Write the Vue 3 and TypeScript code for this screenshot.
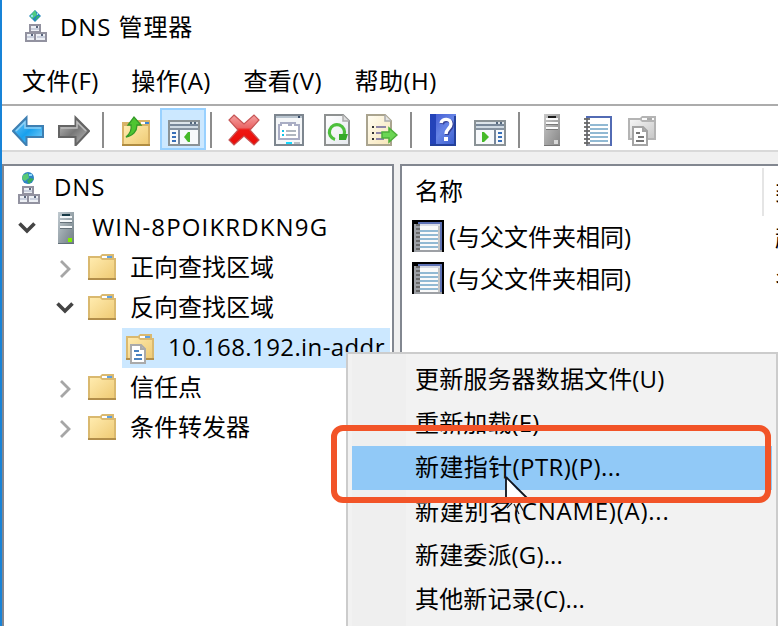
<script setup lang="ts">
interface Tool { icon?: string; active?: boolean; sep?: string }
interface TreeRow { label: string; icon: string; level: number; chevron?: 'open' | 'closed'; selected?: boolean; face?: string }

const menus: string[] = ['文件(F)', '操作(A)', '查看(V)', '帮助(H)']

const tools: Tool[] = [
  { icon: 'back' }, { icon: 'forward' }, { sep: 'wide' },
  { icon: 'up' }, { icon: 'tree-view', active: true }, { sep: 'tight' },
  { icon: 'delete' }, { icon: 'props' }, { icon: 'refresh' }, { icon: 'export' }, { sep: 'mid' },
  { icon: 'help' }, { icon: 'action-view' }, { sep: 'mid' },
  { icon: 'server-gray' }, { icon: 'notebook' }, { icon: 'zone-gray' },
]

const rows: TreeRow[] = [
  { label: 'DNS', icon: 'dns', level: 0, face: 'root' },
  { label: 'WIN-8POIKRDKN9G', icon: 'server', level: 1, chevron: 'open', face: 'host' },
  { label: '正向查找区域', icon: 'folder', level: 2, chevron: 'closed' },
  { label: '反向查找区域', icon: 'folder', level: 2, chevron: 'open' },
  { label: '10.168.192.in-addr', icon: 'zone', level: 3, selected: true, face: 'address' },
  { label: '信任点', icon: 'folder', level: 2, chevron: 'closed' },
  { label: '条件转发器', icon: 'folder', level: 2, chevron: 'closed' },
]

const records = [
  { name: '(与父文件夹相同)', type: '起始授权机构(SOA)' },
  { name: '(与父文件夹相同)', type: '名称服务器(NS)' },
]

const commands: string[] = [
  '更新服务器数据文件(U)', '重新加载(E)', '新建指针(PTR)(P)...',
  '新建别名(CNAME)(A)...', '新建委派(G)...', '其他新记录(C)...',
]
</script>

<template>
  <svg class="sprite" aria-hidden="true">
    <defs>
      <linearGradient id="gBlue" x1="0" y1="0" x2="1" y2="1"><stop offset="0" stop-color="#7cc8f4" /><stop offset=".5" stop-color="#18a0ee" /><stop offset="1" stop-color="#8ed8fb" /></linearGradient>
      <linearGradient id="gGray" x1="0" y1="0" x2="1" y2="1"><stop offset="0" stop-color="#c4c4c4" /><stop offset=".5" stop-color="#777" /><stop offset="1" stop-color="#c0c0c0" /></linearGradient>
      <linearGradient id="gFold" x1="0" y1="0" x2="1" y2="1"><stop offset="0" stop-color="#ffebae" /><stop offset="1" stop-color="#efcb76" /></linearGradient>
      <linearGradient id="gFoldGray" x1="0" y1="0" x2="1" y2="1"><stop offset="0" stop-color="#f5f5f5" /><stop offset="1" stop-color="#c8c8c8" /></linearGradient>
      <linearGradient id="gRed" x1="0" y1="0" x2="0" y2="1"><stop offset="0" stop-color="#f5a2a2" /><stop offset=".42" stop-color="#ea6666" /><stop offset=".5" stop-color="#ef1712" /><stop offset="1" stop-color="#e80c08" /></linearGradient>
      <linearGradient id="gServer" x1="0" y1="0" x2="1" y2="1"><stop offset="0" stop-color="#c1cbd1" /><stop offset="1" stop-color="#6e7b82" /></linearGradient>
      <linearGradient id="gServerGray" x1="0" y1="0" x2="1" y2="1"><stop offset="0" stop-color="#c8c8c8" /><stop offset="1" stop-color="#858585" /></linearGradient>
      <linearGradient id="gHelp" x1="0" y1="0" x2="1" y2="1"><stop offset="0" stop-color="#3d55cf" /><stop offset=".5" stop-color="#6684e6" /><stop offset="1" stop-color="#3559cc" /></linearGradient>
      <linearGradient id="gPage" x1="0" y1="0" x2="1" y2="1"><stop offset="0" stop-color="#fff" /><stop offset="1" stop-color="#e6e9ee" /></linearGradient>
      <linearGradient id="gCream" x1="0" y1="0" x2="1" y2="1"><stop offset="0" stop-color="#fffdf3" /><stop offset="1" stop-color="#f7e5b6" /></linearGradient>
    </defs>

    <symbol id="back" viewBox="0 0 32 32">
      <path d="M1 17 14.5 3.5V12H31V23H14.5V31.5Z" fill="url(#gBlue)" stroke="#3e7fb2" stroke-width="2" />
      <path d="M4 17 13 8V14H29" fill="none" stroke="#8fd0f5" stroke-width="1.5" />
    </symbol>
    <symbol id="forward" viewBox="0 0 32 32">
      <path d="M31 17 17.5 3.5V12H1V23H17.5V31.5Z" fill="url(#gGray)" stroke="#646464" stroke-width="2" />
      <path d="M3 14H19V8L28 17" fill="none" stroke="#bdbdbd" stroke-width="1.5" />
    </symbol>
    <symbol id="up" viewBox="0 0 32 32">
      <path d="M1 8H12L14 6H29V32H1Z" fill="#d8b368" /><path d="M3 12H27V30H3Z" fill="url(#gFold)" />
      <path d="M20 8H28V10H20Z" fill="#fff" /><path d="M24 8H28V10H24Z" fill="#3e86d4" />
      <path d="M1 30H29V32H1Z" fill="#b08c40" />
      <path d="M5 23C9 20 11 15 10 11H7L13 3L20 11H16C16 17 12 22 5 23Z" fill="#4ec531" stroke="#349a28" stroke-width="1.3" />
    </symbol>
    <symbol id="tree-view" viewBox="0 0 32 32">
      <path d="M1 7H31V31H1Z" fill="#f7f9fb" stroke="#8a9296" stroke-width="2" />
      <path d="M2 8H30V10H2Z" fill="#dce4ea" /><path d="M2 10H30V12H2Z" fill="#78889a" /><path d="M2 12H30V14H2Z" fill="#cfdae3" /><path d="M2 14H30V16H2Z" fill="#8592a0" />
      <path d="M22 8H24V10H22ZM26 8H28V10H26Z" fill="#53677d" />
      <path d="M10 16H12V30H10Z" fill="#76869a" /><path d="M4 18H8V20H4ZM4 22H8V24H4ZM4 26H8V28H4Z" fill="#376fb9" />
      <path d="M22 18V28H20L16 23L20 18Z" fill="#45b928" />
    </symbol>
    <symbol id="action-view" viewBox="0 0 32 32">
      <path d="M1 7H31V31H1Z" fill="#f7f9fb" stroke="#8a9296" stroke-width="2" />
      <path d="M2 8H30V10H2Z" fill="#dce4ea" /><path d="M2 10H30V12H2Z" fill="#78889a" /><path d="M2 12H30V14H2Z" fill="#cfdae3" /><path d="M2 14H30V16H2Z" fill="#8592a0" />
      <path d="M22 8H24V10H22ZM26 8H28V10H26Z" fill="#53677d" />
      <path d="M20 16H22V30H20Z" fill="#76869a" /><path d="M24 18H28V20H24ZM24 22H28V24H24ZM24 26H28V28H24Z" fill="#376fb9" />
      <path d="M8 18V28H10L15 23L10 18Z" fill="#45b928" />
    </symbol>
    <symbol id="delete" viewBox="0 0 32 32">
      <path d="M6 1 16 10 26 1 31 6 22 16 31 26 26 31 16 22 6 31 1 26 10 16 1 6Z" fill="url(#gRed)" stroke="#c65555" stroke-width="1.2" />
    </symbol>
    <symbol id="props" viewBox="0 0 32 32">
      <path d="M1 1H29V31H1Z" fill="#f4f6f8" stroke="#7d868f" stroke-width="2" /><path d="M2 2H28V4H2Z" fill="#b9c5d0" /><path d="M24 2H26V4H24Z" fill="#384d69" />
      <path d="M5 11H7V9H15V11H17V9H21V11H25V25H5Z" fill="#fff" stroke="#a9adc4" stroke-width="2" />
      <path d="M8 16H10V18H8ZM8 20H10V22H8Z" fill="#12c4e8" /><path d="M12 16H22V18H12ZM12 20H22V22H12Z" fill="#b0b7c0" />
      <path d="M12 28H18V30H12Z" fill="#13d9ff" /><path d="M20 28H26V30H20Z" fill="#b9c0c6" />
    </symbol>
    <symbol id="refresh" viewBox="0 0 32 32">
      <path d="M5 1H23L29 7V31H5Z" fill="url(#gPage)" stroke="#8e9191" stroke-width="2" /><path d="M23 1V7H29" fill="#ddd" stroke="#aaa" stroke-width="1.5" />
      <path d="M15 25.5A7.6 7.6 0 1 1 24 21" fill="none" stroke="#4dbf3c" stroke-width="3.2" />
      <path d="M19 20H28L26 26H19Z" fill="#35a928" />
    </symbol>
    <symbol id="export" viewBox="0 0 32 32">
      <path d="M1 1H19L25 7V31H1Z" fill="url(#gCream)" stroke="#aaa48f" stroke-width="2" /><path d="M19 1V7H25" fill="#e4e4e4" stroke="#aaa" stroke-width="1.5" />
      <path d="M6 12H8V14H6ZM6 18H8V20H6ZM6 24H8V26H6Z" fill="#333" /><path d="M10 12H20V14H10ZM10 18H18V20H10ZM10 24H18V26H10Z" fill="#8f86a8" />
      <path d="M16 18H23V14L31 21L23 28V24H16Z" fill="#6bd653" stroke="#4eaf3b" stroke-width="1.5" />
    </symbol>
    <symbol id="help" viewBox="0 0 32 32">
      <path d="M2 0H28V32H2Z" fill="url(#gHelp)" /><path d="M2 0H8V32H2Z" fill="#2443b9" /><path d="M2 30H28V32H2ZM26 2H28V32H26Z" fill="#24419c" />
      <path d="M13 9C14 4 23 4 23 10C23 14 18 15 18 20" fill="none" stroke="#36439a" stroke-width="4" transform="translate(1 1)" />
      <path d="M13 9C14 4 23 4 23 10C23 14 18 15 18 20" fill="none" stroke="#fff" stroke-width="3.4" />
      <path d="M16 23H20V27H16Z" fill="#fff" />
    </symbol>
    <symbol id="server" viewBox="0 0 32 32">
      <path d="M8 0H24V32H8Z" fill="url(#gServer)" /><path d="M10 4H22V6H10ZM10 8H22V10H10ZM10 14H22V16H10Z" fill="#f4f7f9" />
      <path d="M10 10H22V11H10ZM10 16H22V17H10Z" fill="#65717a" /><path d="M12 2H20V4H12Z" fill="#183a47" /><path d="M18 26H22V30H18Z" fill="#80f000" /><path d="M8 31H24V32H8Z" fill="#627079" />
    </symbol>
    <symbol id="server-gray" viewBox="0 0 32 32">
      <path d="M8 0H24V32H8Z" fill="url(#gServerGray)" /><path d="M10 4H22V6H10ZM10 8H22V10H10ZM10 13H22V15H10Z" fill="#fafafa" />
      <path d="M10 10H22V11H10ZM10 15H22V16H10Z" fill="#777" /><path d="M12 2H20V4H12Z" fill="#1c1c1c" /><path d="M18 26H22V30H18Z" fill="#d8d8d8" /><path d="M8 31H24V32H8Z" fill="#757575" />
    </symbol>
    <symbol id="notebook" viewBox="0 0 32 32">
      <path d="M5 3H29V31H5Z" fill="#fff" stroke="#999ead" stroke-width="2" /><path d="M4 2H30V4H4ZM28 2H30V32H28Z" fill="#526bb4" />
      <path d="M8 10H26V12H8ZM8 14H26V16H8ZM8 18H26V20H8ZM8 22H26V24H8ZM8 26H26V28H8Z" fill="#91b9d3" />
      <path d="M2 5H8M2 9H8M2 13H8M2 17H8M2 21H8M2 25H8M2 29H8" stroke="#777" stroke-width="2" /><path d="M4 4H6V32H4Z" fill="#555" fill-opacity=".45" />
    </symbol>
    <symbol id="record" viewBox="0 0 32 32">
      <path d="M0 0H32V32H0Z" fill="#000" /><path d="M2 4H6V2H30V32H2Z" fill="#9da0a5" />
      <path d="M8 4H28V30H8Z" fill="#fafafa" /><path d="M8 4H28V6H8Z" fill="#d9dce6" /><path d="M26 6H28V30H26Z" fill="#c4c4c4" /><path d="M6 2H30V4H6ZM28 4H30V30H28Z" fill="#5e72b5" />
      <path d="M8 10H26V12H8ZM8 14H26V16H8ZM8 18H26V20H8ZM8 22H26V24H8ZM8 26H26V28H8Z" fill="#91b9d3" />
      <path d="M4 5H8M4 9H8M4 13H8M4 17H8M4 21H8M4 25H8M4 29H8" stroke="#6a6a6a" stroke-width="2" />
    </symbol>
    <symbol id="folder" viewBox="0 0 32 32">
      <path d="M0 4H12L14 2H26V6H28V28H0Z" fill="#dab96f" /><path d="M2 6H12L14 8H26V26H2Z" fill="url(#gFold)" />
      <path d="M14 4H24V6H14Z" fill="#fff" /><path d="M19 4H24V6H19Z" fill="#5f9fdf" /><path d="M0 26H28V28H0Z" fill="#b28e4a" />
    </symbol>
    <symbol id="zone" viewBox="0 0 32 32">
      <use href="#folder" />
      <path d="M5 13H15L19 17V31H5Z" fill="#fff" stroke="#aaa" stroke-width="2" /><path d="M15 13V17H19" fill="none" stroke="#aaa" stroke-width="2" />
      <path d="M8 18H13V20H8ZM10 22H16V24H10ZM8 26H16V28H8Z" fill="#4b82bf" />
    </symbol>
    <symbol id="zone-gray" viewBox="0 0 32 32">
      <path d="M0 4H12L14 2H28V26H0Z" fill="#b4b4b4" /><path d="M2 6H12L14 8H26V24H2Z" fill="url(#gFoldGray)" /><path d="M14 4H26V6H14Z" fill="#fafafa" /><path d="M19 4H24V6H19Z" fill="#aaa" />
      <path d="M5 13H15L19 17V31H5Z" fill="#fff" stroke="#a4a4a4" stroke-width="2" /><path d="M15 13V17H19" fill="none" stroke="#a4a4a4" stroke-width="2" />
      <path d="M8 18H12V20H8ZM10 22H16V24H10ZM8 26H16V28H8Z" fill="#777" />
    </symbol>
    <symbol id="dns" viewBox="0 0 32 32">
      <circle cx="16" cy="6" r="6" fill="#2e83c5" /><path d="M11 3L16 1L17 6L13 9L10 7Z" fill="#59ca75" /><path d="M18 6L22 7L17 12L15 9Z" fill="#39ad58" /><path d="M17 2H20V4H17Z" fill="#8cd8fa" />
      <path d="M11 15H21V22H11ZM7 23H16V31H7ZM16 23H27V31H16Z" fill="#edf0f5" stroke="#9292a0" stroke-width="2" />
      <path d="M12 18H20V20H12ZM8 26H15V28H8ZM18 26H26V28H18Z" fill="#c9cfdd" /><path d="M17 16H19V18H17ZM12 24H14V26H12ZM22 24H24V26H22Z" fill="#59657c" />
    </symbol>
    <symbol id="dns-title" viewBox="0 0 32 32">
      <path d="M16 0L22 6L16 12L10 6Z" fill="#2687bd" /><path d="M16 0L18 5L13 9L11 6Z" fill="#4fcb83" /><path d="M18 6H21L16 11Z" fill="#37b867" /><path d="M12 5H14V7H12ZM18 3H19V5H18Z" fill="#94e1f4" />
      <path d="M11 15H21V22H11ZM7 23H16V31H7ZM16 23H27V31H16Z" fill="#edf0f5" stroke="#9292a0" stroke-width="2" />
      <path d="M12 18H20V20H12ZM8 26H15V28H8ZM18 26H26V28H18Z" fill="#c9cfdd" /><path d="M17 16H19V18H17ZM12 24H14V26H12ZM22 24H24V26H22Z" fill="#59657c" />
    </symbol>
    <symbol id="open" viewBox="0 0 30 30"><path d="M7.5 10.5 15 18 22.5 10.5" fill="none" stroke="#444" stroke-width="3.6" /></symbol>
    <symbol id="closed" viewBox="0 0 30 30"><path d="M11 8 19 16 11 24" fill="none" stroke="#a6a6a6" stroke-width="2.8" /></symbol>
  </svg>

  <div class="window">
    <header class="title">
      <svg class="icon"><use href="#dns-title" /></svg>
      <span class="title-text">DNS 管理器</span>
    </header>
    <nav class="menubar"><span v-for="m in menus" :key="m" class="menu">{{ m }}</span></nav>
    <div class="toolbar">
      <template v-for="(t, i) in tools" :key="i">
        <span v-if="t.sep" class="sep" :class="t.sep"></span>
        <span v-else class="tool" :class="{ active: t.active }"><svg class="icon"><use :href="'#' + t.icon" /></svg></span>
      </template>
    </div>
    <main class="panes">
      <section class="pane tree">
        <div v-for="r in rows" :key="r.label" class="row" :class="['level' + r.level, { selected: r.selected }]">
          <span v-if="r.chevron" class="chevron"><svg class="chev"><use :href="'#' + r.chevron" /></svg></span>
          <svg class="icon"><use :href="'#' + r.icon" /></svg>
          <span class="label" :class="r.face">{{ r.label }}</span>
        </div>
      </section>
      <section class="pane list">
        <div class="list-head"><span class="head-name">名称</span><span class="head-type">类型</span></div>
        <div v-for="(r, i) in records" :key="i" class="record">
          <svg class="icon"><use href="#record" /></svg><span class="rec-name">{{ r.name }}</span><span class="rec-type">{{ r.type }}</span>
        </div>
      </section>
    </main>

    <div class="context">
      <div v-for="(c, i) in commands" :key="c" class="command" :class="{ hot: i === 2, alias: i === 3 }">{{ c }}</div>
    </div>
    <svg class="cursor" viewBox="0 0 28 42">
      <path d="M4 1V26H25Z" fill="#fff" />
      <path d="M4 1V26M4 1L26 23" fill="none" stroke="#10131c" stroke-width="1.8" />
      <path d="M5 32L10 27M12 28L17 38M17 27L22 36" fill="none" stroke="#222" stroke-width="1.2" />
    </svg>
    <div class="marker"></div>
  </div>
</template>

<style>
html, body { margin: 0; overflow: hidden; }
</style>

<style scoped>
.sprite { position: absolute; width: 0; height: 0; }
.window { position: relative; box-sizing: border-box; width: 778px; height: 626px; overflow: hidden; display: flex; flex-direction: column; border-left: 2px solid #1883d7; background: #fff; color: #000; font-family: "Open Sans", "Noto Sans CJK SC", sans-serif; font-size: 24px; white-space: nowrap; }
.icon { width: 32px; height: 32px; flex: none; display: block; }
.title { display: flex; height: 54px; padding: 0 0 2px 17px; align-items: center; box-sizing: border-box; }
.title-text { margin-left: 9px; padding-bottom: 2px; letter-spacing: 0.9px; }
.menubar { display: flex; box-sizing: border-box; height: 52px; padding-left: 20px; gap: 32.5px; line-height: 54px; letter-spacing: 0.45px; border-bottom: 2px solid #acacac; }
.toolbar { display: flex; box-sizing: border-box; height: 46px; padding: 2px 0 0 3px; border-bottom: 2px solid #d9d9d9; }
.tool { width: 46px; height: 42px; flex: none; box-sizing: border-box; padding: 6px 7px 0; }
.tool.active { background: #cce8ff; border: 2px solid #99d1ff; padding: 4px 6px 0; }
.sep { width: 2px; height: 36px; margin: 4px 9px 0 5px; flex: none; background: #8c8c8c; }
.sep.wide { margin-right: 10px; }
.sep.tight { margin-left: 4px; }
.panes { display: flex; flex: 1; gap: 6px; padding-top: 12px; background: #f0f0f0; }
.pane { box-sizing: border-box; border: 2px solid #828790; border-bottom: 0; background: #fff; overflow: hidden; }
.tree { width: 392px; padding-top: 2px; }
.list { flex: 1; border-right: 0; }
.row { display: flex; align-items: center; height: 40px; box-sizing: border-box; margin-right: 2px; padding-left: 8px; }
.level2 { padding-left: 46px; }
.level3 { margin-left: 118px; padding-left: 4px; }
.selected { background: #cce8ff; }
.chevron { width: 38px; flex: none; }
.chev { width: 30px; height: 30px; display: block; }
.label { margin-left: 10px; padding-bottom: 5px; }
.root { letter-spacing: 0.9px; padding-bottom: 4px; }
.host { letter-spacing: 1.15px; padding-bottom: 4px; }
.address { letter-spacing: 0.4px; padding-bottom: 4px; }
.list-head { display: flex; height: 48px; line-height: 46px; margin-top: 2px; }
.head-name { box-sizing: border-box; width: 362px; padding-left: 13px; border-right: 2px solid #e5e5e5; flex: none; }
.head-type { padding-left: 11px; }
.record { display: flex; box-sizing: border-box; height: 42px; align-items: center; padding: 0 0 2px 10px; }
.rec-name { width: 326px; margin-left: 5px; padding-bottom: 2px; flex: none; }
.rec-type { padding-bottom: 2px; }
.context { position: absolute; left: 344px; top: 352px; width: 432px; height: 290px; box-sizing: border-box; border: 2px solid #ccc; padding: 4px; background: linear-gradient(90deg, #f2f2f2 4px, #efefef 4px, #efefef 58px, #f2f2f2 58px); }
.command { height: 44px; line-height: 42px; padding-left: 63px; letter-spacing: 0.15px; }
.hot { background: #91c9f7; letter-spacing: 0.4px; }
.alias { letter-spacing: 0.75px; }
.marker { position: absolute; left: 329px; top: 425px; width: 440px; height: 78px; box-sizing: border-box; border: 6px solid #f25428; border-radius: 12px; }
.cursor { position: absolute; left: 500px; top: 476px; width: 28px; height: 42px; }
</style>
